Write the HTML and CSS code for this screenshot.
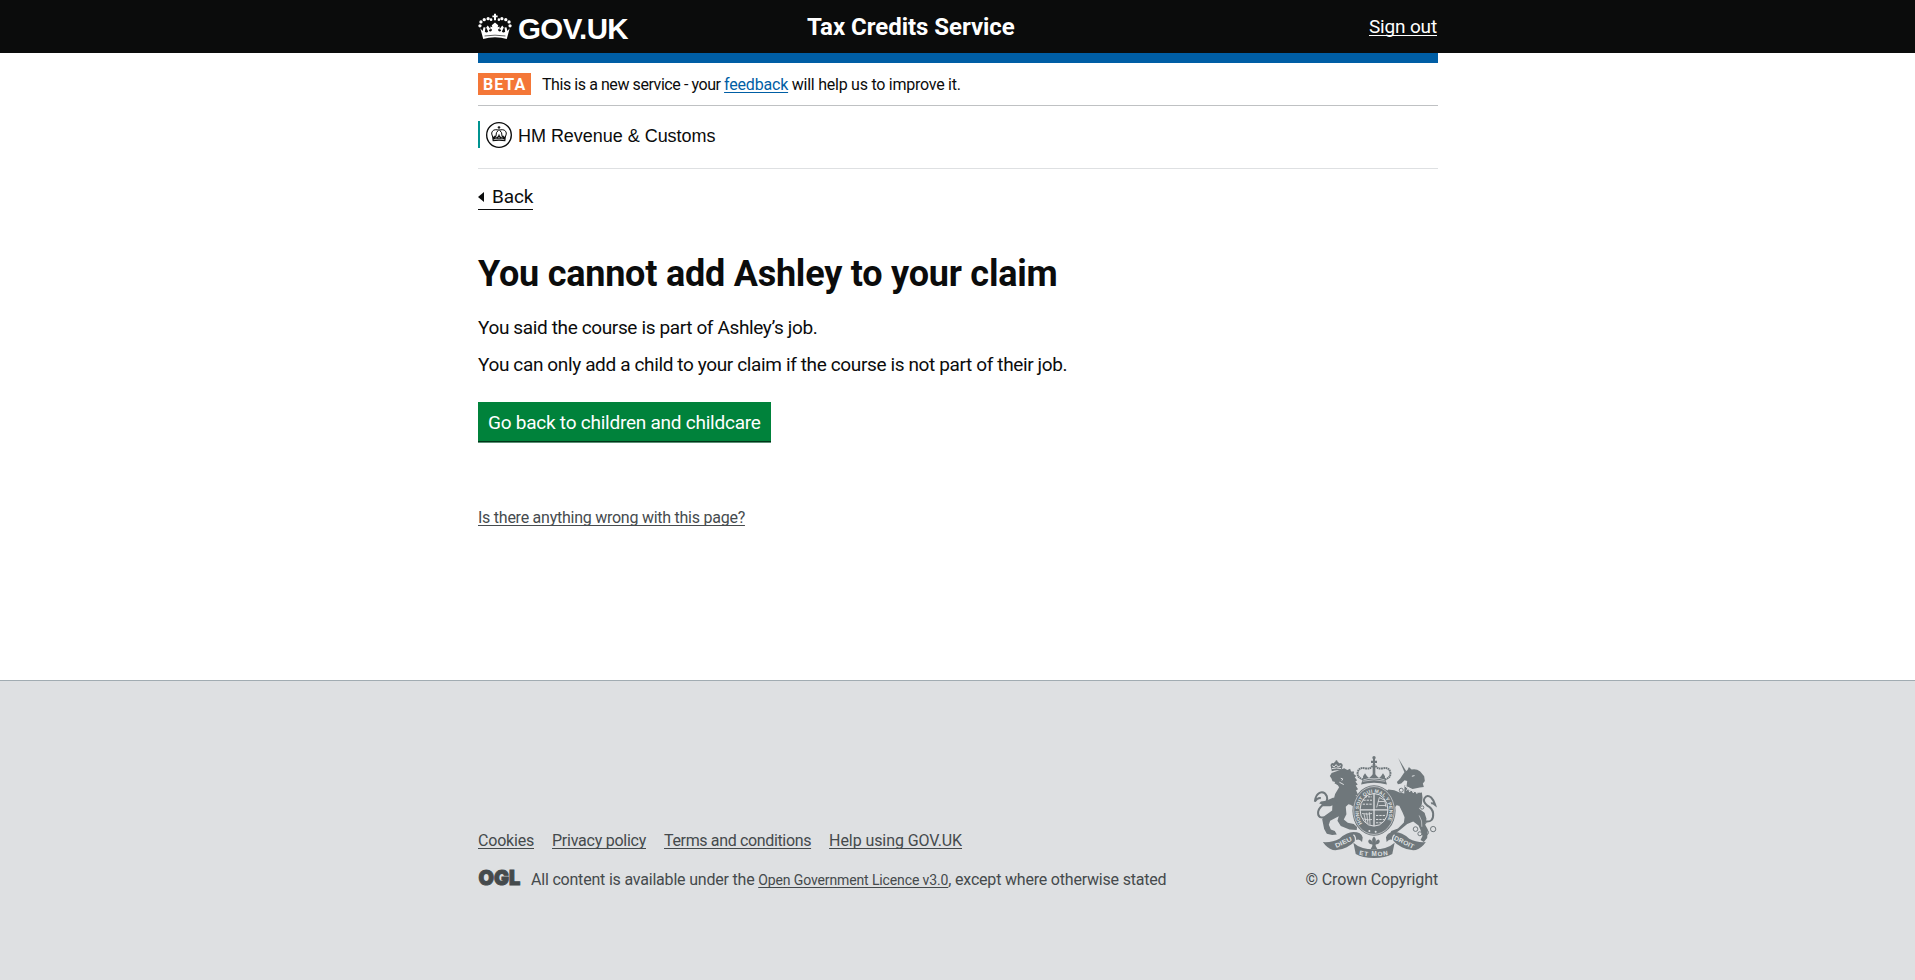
FILE: index.html
```html
<!DOCTYPE html>
<html lang="en">
<head>
<meta charset="utf-8">
<title>You cannot add Ashley to your claim</title>
<link rel="stylesheet" href="styles.css">
</head>
<body>
<header class="header">
  <div class="wrap header-row">
    <a class="brand" href="#">
      <svg class="brand-crown" viewBox="24 38 104 80" fill="#fff" aria-hidden="true">
        <path d="M73 39h6v5h5v6h-5v9h-6v-9h-5v-6h5z"/>
        <g id="half-crown">
          <circle cx="64" cy="57" r="4"/><circle cx="55" cy="54" r="5"/><circle cx="43" cy="57" r="5"/><circle cx="33" cy="64" r="5"/><circle cx="30" cy="76" r="5"/>
          <path d="M31 83l7 9 3-12 6 1-2 13q6 5 10-1l-6-12 5-6 7 10-4 6q5 5 9 0v-6l-4 2v-9l6 2-2-6 10-8v45q-20 0-36 5z"/>
        </g>
        <use href="#half-crown" transform="translate(152 0) scale(-1 1)"/>
        <path d="M44 107q32-5 64 0" fill="none" stroke="#0b0c0c" stroke-width="2"/>
      </svg>
      <span class="brand-text">GOV.UK</span>
    </a>
    <span class="service">Tax Credits Service</span>
    <a class="signout" href="#">Sign out</a>
  </div>
</header>

<div class="wrap main">
  <div class="bar"></div>
  <div class="phase">
    <strong class="tag">BETA</strong>
    <span class="phase-text"><span class="phase-a">This is a new service - your </span><a class="feedback" href="#">feedback</a><span class="phase-b"> will help us to improve it.</span></span>
  </div>
  <div class="org">
    <div class="org-inner">
      <svg class="org-crest" viewBox="0 0 78 78" aria-hidden="true">
        <circle cx="39" cy="39" r="37" fill="#fff" stroke="#0b0c0c" stroke-width="4"/>
        <g fill="none" stroke="#0b0c0c" stroke-width="3">
          <path d="M37 24Q20 20 17 33q0 6 4 13M41 24q17-4 20 9 0 6-4 13M37 25q-8 6-7 17M41 25q8 6 7 17"/>
          <path d="M39 12v13M35 16h8"/>
        </g>
        <path d="M18 40l5 5 4-5 5 5 4-2 3-8 3 8 4 2 5-5 4 5 5-5-2 18q-19-4-38 0z" fill="#0b0c0c"/>
        <path d="M23 53q16-3 32 0M28 48h4M37 47h4M46 48h4" fill="none" stroke="#fff" stroke-width="2"/>
      </svg>
      <span class="org-name">HM Revenue &amp; Customs</span>
    </div>
  </div>
  <a class="back" href="#"><svg class="back-arrow" viewBox="0 0 6 10" aria-hidden="true"><path d="M0 5L6 0v10z" fill="#0b0c0c"/></svg><span>Back</span></a>
  <h1 class="title">You cannot add Ashley to your claim</h1>
  <p class="para">You said the course is part of Ashley’s job.</p>
  <p class="para">You can only add a child to your claim if the course is not part of their job.</p>
  <a class="button" href="#">Go back to children and childcare</a>
  <a class="report" href="#">Is there anything wrong with this page?</a>
</div>

<footer class="footer">
  <div class="wrap footer-row">
    <div class="footer-meta">
      <nav class="footer-links">
        <a class="l-cookies" href="#">Cookies</a>
        <a class="l-privacy" href="#">Privacy policy</a>
        <a class="l-terms" href="#">Terms and conditions</a>
        <a class="l-help" href="#">Help using GOV.UK</a>
      </nav>
      <div class="licence">
        <svg class="ogl" viewBox="0 0 43 18"><text class="ogl-text" x="0.6" y="16.5" textLength="41.8" lengthAdjust="spacingAndGlyphs">OGL</text></svg>
        <span class="licence-text">All content is available under the <a class="licence-link" href="#">Open Government Licence v3.0</a>, except where otherwise stated</span>
      </div>
    </div>
    <div class="copyright">
      <svg class="arms" viewBox="69 47 375 307" aria-hidden="true">
        <g fill="#6f777b">
          <!-- lion -->
          <path d="M121 74q3-8 10-5 3-6 8-6t8 6q8-3 11 5l-4 18q-14-5-29 1z"/>
          <circle cx="139" cy="63" r="3"/>
          <path d="M124 98l24-8 14-6 10 5 8-4 3 9 9 0-1 7 8 6-5 4 7 9-5 4 7 9-6 3 7 11-6 3 6 14-7 2 4 16 5 8 3 24-10-4-8-10-10-6-6-2-8 8 2 22-8 16 12 10 18 4 10 9-1 9-22-2-26-10-10-16 4-14-26 14-4 12 6 14 12 5 6 10-14 2-16-4-8-14-6-30 8-10 22-16 1-20 8-30 12-20-4-6-10-6 2-4-8-2-3-8-5-8 5-8z"/>
          <path d="M130 172l-22 10-16 2-5 6 8 2-3 6 28 0 22-8z"/>
          <!-- unicorn -->
          <path d="M325 53l24 40-5 4z"/>
          <path d="M343 97l10-8 4-9 8 8q14-4 26 6l12 14 2 14-6 8 3 10-12 2-22 4-18-8 2-16-8-2-10 10-10 2-3-7 10-10z"/>
          <path d="M344 134q20 24 52 22l2 16-2 20-8 14 16 12 6 18-4 18 8 14-2 26-10 12-10-6 6-12-6-18-6-14-16-12-18 8-22 18-14 10-16 1 4-8 20-8 18-18 2-16-6-14-10-20-8-2-8 10-10-5-6-14 8-4 2-8-12-10 4-6-9-4 6-6 18 2 14 6 16 4z"/>
          <!-- crown -->
          <circle cx="252" cy="52" r="5"/><path d="M249 54h6v24h-6zM243 61h18v7h-18zM248 76h8v36h-8z"/>
          <path d="M217 120q35-10 70 0l4 13q-39-11-78 0z"/>
          <path d="M219 118l0-10 6-9 6 9 6 5 6-5 9-10 9 10 6 5 6-5 6-9 6 9v10q-33-9-66 0z"/>
          <!-- shield and garter -->
          <ellipse cx="252" cy="211" rx="65" ry="76"/>
          <!-- ribbon -->
          <path d="M98 306q28 2 50-10 22-20 42-20 24 0 28 16l-2 14q-8-12-18-6-14 16-28 22-18 10-42 8-18-6-30-24z"/>
          <path d="M408 306q-28 2-50-10-22-20-42-20-24 0-28 16l2 14q8-12 18-6 14 16 28 22 18 10 42 8 18-6 30-24z"/>
          <path d="M190 308q22 20 62 20t62-20l-7 34q-20 12-55 12t-55-12z"/>
        </g>
        <g fill="none" stroke="#6f777b">
          <path d="M110 230Q80 238 84 214q4-14 18-22 12-10 8-24-8-16-22-10-12 6-14 26 8-12 18-10" stroke-width="6"/>
          <path d="M406 244q26 4 24-24-2-16-18-24-14-12-8-22 8-12 20-2 8 8 12 22-8-6-12-4" stroke-width="6"/>
          <path d="M220 118Q200 112 203 96q4-16 22-12 18 4 24-10M284 118q20-6 17-22-4-16-22-12-18 4-24-10" stroke-width="6" stroke-dasharray="5 1.5"/>
          <circle cx="397" cy="202" r="5" stroke-width="3"/><circle cx="399" cy="224" r="5" stroke-width="3"/><circle cx="403" cy="246" r="6" stroke-width="3"/>
          <circle cx="377" cy="267" r="7" stroke-width="3"/><circle cx="390" cy="281" r="6" stroke-width="3"/><circle cx="409" cy="277" r="7" stroke-width="3"/><circle cx="430" cy="267" r="8" stroke-width="3"/>
          <circle cx="334" cy="150" r="6" stroke-width="3"/><circle cx="316" cy="166" r="6" stroke-width="3"/><circle cx="326" cy="188" r="6" stroke-width="3"/>
        </g>
        <g fill="none" stroke="#dee0e2">
          <ellipse cx="252" cy="211" rx="61" ry="72" stroke-width="2"/>
          <ellipse cx="252" cy="209" rx="42" ry="49" stroke-width="3"/>
          <path d="M252 160v98M210 209h84" stroke-width="4"/>
          <path d="M220 180h26M218 192h28M224 170h22M258 226h30M258 238h26M258 248h18" stroke-width="3" stroke-dasharray="7 3"/>
          <path d="M260 202l8-30 16 8 4 20M264 184h20M266 196h22M222 222l6 26M230 218l4 34M238 216l2 38M216 220q18 4 30 0M220 236q14 6 26 2" stroke-width="2.5"/>
          <path d="M345 137q18 20 50 19" stroke-width="3"/>
          <path d="M350 151l6-9 3 13 7-8 4 11 7-8 4 10 6-6" stroke-width="3"/>
          <path d="M218 123q34-9 68 0" stroke-width="2"/>
          <path d="M125 85q14-4 28 0M126 76l6 4 6-7 6 7 8-4M152 114l6 2-3 5M148 126l13 7M366 108l8-2" stroke-width="3"/>
          <path d="M190 284q8 6 6 20M314 284q-8 6-6 20" stroke-width="4"/>
          <path d="M388 226q10 16 8 34" stroke-width="2"/>
        </g>
        <circle cx="238" cy="273" r="3" fill="#dee0e2"/><circle cx="257" cy="275" r="3" fill="#dee0e2"/>
        <path d="M252 289q9 9 4 19 4-11 11-9 6 6-3 13l-7 1v5l5 9h-20l5-9v-5l-7-1q-9-7-3-13 7-2 11 9-5-10 4-19z" fill="#6f777b"/>
        <defs><path id="garter" d="M217 250A46 56 0 1 1 287 250"/><path id="motto" d="M207 344q45 10 92 0"/></defs>
        <text class="arms-garter"><textPath href="#garter" textLength="226">HONI SOIT QUI MAL Y PENSE</textPath></text>
        <text class="arms-motto" transform="translate(138 324) rotate(-25)" textLength="54" lengthAdjust="spacingAndGlyphs">DIEU</text>
        <text class="arms-motto"><textPath href="#motto" textLength="88">ET MON</textPath></text>
        <text class="arms-motto" transform="translate(311 298) rotate(26)" textLength="64" lengthAdjust="spacingAndGlyphs">DROIT</text>
      </svg>
      <a class="crown" href="#">© Crown Copyright</a>
    </div>
  </div>
</footer>
</body>
</html>
```
FILE: styles.css
```css
* { box-sizing: border-box; }
body { margin: 0; font-family: Roboto, "Noto Sans", sans-serif; font-size: 19px; line-height: 25px; color: #0b0c0c; background: #fff; overflow-x: hidden; }
a { color: inherit; text-decoration: underline; text-decoration-thickness: 1px; text-underline-offset: 2px; text-decoration-skip-ink: none; }
svg { display: block; flex: none; overflow: visible; }
.wrap { width: 960px; margin-left: 478px; }

.header { height: 53px; background: #0b0c0c; color: #fff; }
.header-row { display: flex; height: 53px; line-height: 53px; }
.brand { display: flex; width: 329px; text-decoration: none; }
.brand-crown { width: 34px; height: 27px; margin: 13px 6px 0 0; }
.brand-text { font-family: "Liberation Sans", Arial, sans-serif; font-weight: 700; font-size: 29.5px; letter-spacing: -0.6px; padding-top: 2px; height: 53px; }
.service { font-size: 24px; font-weight: 700; letter-spacing: -0.03px; padding-top: 1px; height: 53px; }
.signout { margin-left: auto; margin-right: 1px; letter-spacing: -0.16px; }

.main { display: flex; flex-direction: column; align-items: flex-start; height: 627px; }
.bar { width: 960px; height: 10px; background: #005ea5; }
.phase { display: flex; width: 960px; height: 43px; padding: 10px 0; border-bottom: 1px solid #bfc1c3; font-size: 16px; line-height: 22px; }
.tag { width: 53px; height: 22px; padding: 1px 0 0 5px; margin-right: 11px; background: #f47738; color: #fff; letter-spacing: 1px; font-size: 16px; }
.phase-text { white-space: pre; padding-top: 1px; height: 22px; }
.phase-a { letter-spacing: -0.43px; }
.feedback { color: #005ea5; letter-spacing: -0.19px; }
.phase-b { letter-spacing: -0.25px; }
.org { width: 960px; height: 63px; padding-top: 15px; border-bottom: 1px solid #dee0e2; }
.org-inner { display: flex; height: 27px; border-left: 2px solid #009390; padding-left: 6px; }
.org-crest { width: 26px; height: 26px; margin: 1px 6px 0 0; }
.org-name { font: 18px/30px "Liberation Sans", Arial, sans-serif; letter-spacing: -0.03px; height: 27px; }
.back { display: flex; align-items: center; height: 25px; margin-top: 16px; border-bottom: 1px solid #0b0c0c; line-height: 26px; text-decoration: none; letter-spacing: -0.1px; }
.back-arrow { width: 6px; height: 10px; margin-right: 8px; }
.title { margin: 44px 0 21px; font-size: 36px; line-height: 40px; font-weight: 700; letter-spacing: -0.23px; }
.para { margin: 0 0 12px; letter-spacing: -0.37px; }
.button { margin-top: 13px; padding: 8px 10px 6px; width: 293px; color: #fff; background: #00823b; border-bottom: 1px solid #003618; box-shadow: 0 1px #5c8f75; text-decoration: none; letter-spacing: -0.24px; white-space: nowrap; }
.report { margin-top: 66px; font-size: 16px; line-height: 20px; color: #464b4e; letter-spacing: -0.25px; }

.footer { height: 300px; border-top: 1px solid #a1acb2; background: #dee0e2; color: #454a4c; font-size: 16px; line-height: 20px; }
.footer-row { display: flex; justify-content: space-between; padding-top: 75px; }
.footer-meta { padding-top: 75px; }
.footer-links { display: flex; gap: 18px; }
.l-cookies { letter-spacing: -0.2px; }
.l-privacy { letter-spacing: -0.25px; }
.l-terms { letter-spacing: -0.35px; }
.l-help { letter-spacing: -0.08px; }
.licence { display: flex; margin-top: 19px; }
.ogl { width: 43px; height: 18px; margin: -2px 10px 0 0; }
.ogl-text { font: 900 20.5px Inter, sans-serif; fill: #454a4c; stroke: #454a4c; stroke-width: 1px; }
.licence-text { letter-spacing: -0.2px; }
.licence-link { font-size: 14px; letter-spacing: -0.12px; }
.copyright { display: flex; flex-direction: column; align-items: flex-end; }
.arms { width: 125px; height: 102px; }
.crown { margin-top: 12px; text-decoration: none; letter-spacing: -0.12px; }
.arms-garter { font: 700 15px "Liberation Sans", sans-serif; fill: #dee0e2; }
.arms-motto { font: 700 19px "Liberation Sans", sans-serif; fill: #dee0e2; }
```
